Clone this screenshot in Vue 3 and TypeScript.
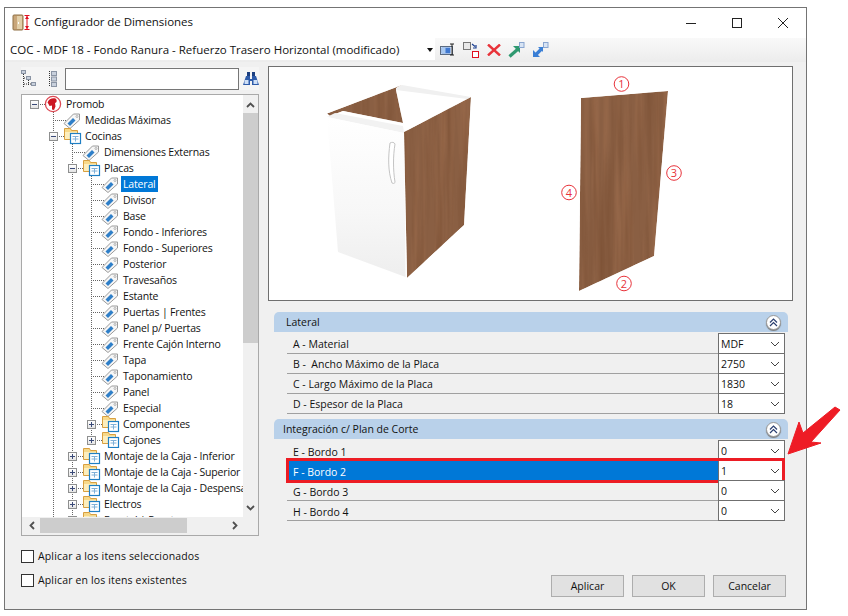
<script setup lang="ts">
type Row = { t: string; l: number; k: 'root' | 'tag' | 'folder'; e?: '+' | '-'; sel?: boolean };
const rows: Row[] = [
  { t: 'Promob', l: 0, k: 'root', e: '-' },
  { t: 'Medidas Máximas', l: 1, k: 'tag' },
  { t: 'Cocinas', l: 1, k: 'folder', e: '-' },
  { t: 'Dimensiones Externas', l: 2, k: 'tag' },
  { t: 'Placas', l: 2, k: 'folder', e: '-' },
  { t: 'Lateral', l: 3, k: 'tag', sel: true },
  { t: 'Divisor', l: 3, k: 'tag' },
  { t: 'Base', l: 3, k: 'tag' },
  { t: 'Fondo - Inferiores', l: 3, k: 'tag' },
  { t: 'Fondo - Superiores', l: 3, k: 'tag' },
  { t: 'Posterior', l: 3, k: 'tag' },
  { t: 'Travesaños', l: 3, k: 'tag' },
  { t: 'Estante', l: 3, k: 'tag' },
  { t: 'Puertas | Frentes', l: 3, k: 'tag' },
  { t: 'Panel p/ Puertas', l: 3, k: 'tag' },
  { t: 'Frente Cajón Interno', l: 3, k: 'tag' },
  { t: 'Tapa', l: 3, k: 'tag' },
  { t: 'Taponamiento', l: 3, k: 'tag' },
  { t: 'Panel', l: 3, k: 'tag' },
  { t: 'Especial', l: 3, k: 'tag' },
  { t: 'Componentes', l: 3, k: 'folder', e: '+' },
  { t: 'Cajones', l: 3, k: 'folder', e: '+' },
  { t: 'Montaje de la Caja - Inferior', l: 2, k: 'folder', e: '+' },
  { t: 'Montaje de la Caja - Superior', l: 2, k: 'folder', e: '+' },
  { t: 'Montaje de la Caja - Despensa', l: 2, k: 'folder', e: '+' },
  { t: 'Electros', l: 2, k: 'folder', e: '+' },
  { t: 'Frontal | Puertas', l: 2, k: 'folder', e: '+' },
];
const groups = [
  {
    title: 'Lateral',
    cls: 'g1',
    rows: [
      { label: 'A - Material', value: 'MDF' },
      { label: 'B -  Ancho Máximo de la Placa', value: '2750' },
      { label: 'C - Largo Máximo de la Placa', value: '1830' },
      { label: 'D - Espesor de la Placa', value: '18' },
    ],
  },
  {
    title: 'Integración c/ Plan de Corte',
    cls: 'g2',
    rows: [
      { label: 'E - Bordo 1', value: '0' },
      { label: 'F - Bordo 2', value: '1', sel: true },
      { label: 'G - Bordo 3', value: '0' },
      { label: 'H - Bordo 4', value: '0' },
    ],
  },
];
const badges = [
  { n: '1', x: 621.5, y: 84 },
  { n: '3', x: 674, y: 173 },
  { n: '4', x: 569, y: 192.5 },
  { n: '2', x: 624, y: 283.5 },
];
</script>

<template>
  <div class="page">
    <div class="dialog">
      <header class="titlebar">
        <svg class="app-icon" width="20" height="18" viewBox="0 0 20 18">
          <rect x="1" y="1" width="10" height="15" rx="1" fill="#c9a67a" stroke="#8f7045" />
          <rect x="5" y="2" width="5" height="13" fill="#e2cfa9" />
          <path d="M6.5 8v2" stroke="#fff" />
          <path d="M12.5 1.5h5M15 2v13M12.5 15.5h5" stroke="#e01020" fill="none" />
          <path d="M13 5l2-3 2 3zM13 12l2 3 2-3z" fill="#e01020" />
        </svg>
        <span class="title">Configurador de Dimensiones</span>
        <div class="win-controls">
          <svg width="10" height="10" viewBox="0 0 10 10"><path d="M0 5.5h10" stroke="#222" /></svg>
          <svg width="10" height="10" viewBox="0 0 10 10"><rect x=".5" y=".5" width="9" height="9" fill="none" stroke="#222" /></svg>
          <svg width="10" height="10" viewBox="0 0 10 10"><path d="M0 0l10 10M10 0L0 10" stroke="#222" /></svg>
        </div>
      </header>

      <div class="toolbar">
        <div class="combo">
          <span>COC - MDF 18 - Fondo Ranura - Refuerzo Trasero Horizontal (modificado)</span>
          <i class="combo-caret"></i>
        </div>
        <div class="tools">
          <svg width="16" height="14" viewBox="0 0 16 14">
            <rect x=".5" y="3.5" width="12" height="8" fill="#fff" stroke="#5a6a80" />
            <rect x="1.5" y="4.5" width="9" height="6" fill="#3f78d0" />
            <rect x="1.5" y="4.5" width="4" height="6" fill="#a8c8f0" />
            <path d="M10 1h4M12 1v11M10 12h4" stroke="#222" fill="none" />
          </svg>
          <svg width="17" height="17" viewBox="0 0 17 17">
            <rect x=".5" y=".5" width="7" height="7" fill="#e8e8e8" stroke="#777" />
            <rect x="9.5" y="9.5" width="6" height="6" fill="#fff" stroke="#e01020" />
            <path d="M9 2l3 2.5M13 3v3h-3" stroke="#1a3f90" fill="none" stroke-width="1.2" />
          </svg>
          <svg width="14" height="12" viewBox="0 0 14 12">
            <path d="M1 .5l12 11M13 .5L1 11.5" stroke="#e8333a" stroke-width="2.4" />
          </svg>
          <svg width="17" height="16" viewBox="0 0 17 16">
            <path d="M1.5 14.5l8-7" stroke="#2f9970" stroke-width="3.2" />
            <path d="M5 4h7v7z" fill="#2f9970" />
            <rect x="11.5" y=".5" width="4.5" height="5" fill="#d8e4f4" stroke="#8aa6d0" />
          </svg>
          <svg width="17" height="16" viewBox="0 0 17 16">
            <path d="M10 6.5l-6 6" stroke="#3a7fd5" stroke-width="3.2" />
            <path d="M1 15V8l7 7z" fill="#3a7fd5" />
            <path d="M6 5h5v5z" fill="#3a7fd5" />
            <rect x="11.5" y=".5" width="4.5" height="5" fill="#d8e4f4" stroke="#8aa6d0" />
          </svg>
        </div>
      </div>

      <main class="body">
        <aside class="left">
          <div class="search-row">
            <svg width="15" height="17" viewBox="0 0 15 17" class="ticon">
              <rect x=".5" y=".5" width="4" height="3" fill="#c8d0dc" stroke="#8a94a4" />
              <rect x="5.5" y="6.5" width="4" height="3" fill="#c8d0dc" stroke="#8a94a4" />
              <rect x="10.5" y="12.5" width="4" height="3" fill="#c8d0dc" stroke="#8a94a4" />
              <path d="M2.5 4v13M7.5 10v6M3 8h2M3 14h7" stroke="#333" stroke-dasharray="1 1" fill="none" />
            </svg>
            <svg width="10" height="16" viewBox="0 0 10 16" class="ticon2">
              <path d="M1.5 0v16" stroke="#333" stroke-dasharray="1 1" />
              <rect x="3.5" y=".5" width="5" height="4" fill="#c8d0dc" stroke="#8a94a4" />
              <rect x="3.5" y="6" width="5" height="4" fill="#c8d0dc" stroke="#8a94a4" />
              <rect x="3.5" y="11.5" width="5" height="4" fill="#c8d0dc" stroke="#8a94a4" />
            </svg>
            <div class="search-input"></div>
            <svg width="16" height="14" viewBox="0 0 16 14">
              <path d="M4 0h3v6H4zM9 0h3v6H9z" fill="#1c3f80" />
              <path d="M3 4h4v3h2V4h4l3 9H9V9H7v4H0z" fill="#2f5caa" />
              <rect x="1.5" y="8" width="4" height="4" fill="#cfe0f7" />
              <rect x="10.5" y="8" width="4" height="4" fill="#cfe0f7" />
            </svg>
          </div>

          <div class="tree-box">
            <div class="tree-top">
              <div class="tree-pane">
                <svg class="tree-lines" width="221" height="422" viewBox="22 95 221 422">
                  <path d="M53.5 112V517M72.5 144V517M91.5 176V440" stroke="#666" stroke-dasharray="1 1" fill="none" />
                  <template v-for="(r, i) in rows" :key="i">
                    <path
                      :d="`M${34 + 19 * r.l} ${104.5 + i * 16}h14`"
                      stroke="#666"
                      stroke-dasharray="1 1"
                    />
                  </template>
                </svg>
                <div v-for="r in rows" :key="r.t" class="tree-row" :style="{ paddingLeft: 19 * r.l + 'px' }">
                  <span class="exp-cell">
                    <span v-if="r.e" class="exp">
                      <i class="h"></i><i v-if="r.e === '+'" class="v"></i>
                    </span>
                  </span>
                  <svg v-if="r.k === 'root'" class="ico" width="20" height="18" viewBox="0 0 20 18">
                    <circle cx="10" cy="9" r="7.6" fill="#fff" stroke="#dd4a54" stroke-width="1.3" />
                    <path d="M4.5 7.5c1-3.5 5-5 8-4 1.5 1.5 1.5 3 .5 4l-1 .5.5 3.5-1.5 3.5-2-.5V10.5l-2.5.5-1-2z" fill="#cc1622" />
                  </svg>
                  <svg v-else-if="r.k === 'tag'" class="ico" width="20" height="18" viewBox="0 0 20 18">
                    <path d="M2 12.5L11.5 3h6v6L8 17.5z" fill="#f6f6f6" stroke="#9a9a9a" />
                    <path d="M5.5 12.5L11 7l2.5 2.5L8 15z" fill="#2f7fc8" />
                    <circle cx="15" cy="5.5" r="1" fill="#fff" stroke="#888" stroke-width=".6" />
                  </svg>
                  <svg v-else class="ico fld" width="20" height="18" viewBox="0 0 20 18">
                    <path d="M2.5 1.5h6l1 2h6v9h-13z" fill="#f7d98a" stroke="#d9a040" />
                    <path d="M3 5h12v7H3z" fill="#fdeebd" />
                    <rect x="8.5" y="6.5" width="10" height="10" fill="#fff" stroke="#1f7fc4" stroke-width="1.2" />
                    <path d="M10.5 9.5h6M13.5 9v5.5M10.5 12h6" stroke="#7fb0d8" fill="none" />
                  </svg>
                  <span class="tree-label" :class="{ selected: r.sel }">{{ r.t }}</span>
                </div>
              </div>
              <div class="vscroll">
                <svg class="chev" width="9" height="6" viewBox="0 0 9 6"><path d="M1 5l3.5-3.5L8 5" fill="none" stroke="#505050" stroke-width="1.8" /></svg>
                <div class="vtrack"><div class="vthumb"></div></div>
                <svg class="chev" width="9" height="6" viewBox="0 0 9 6"><path d="M1 1l3.5 3.5L8 1" fill="none" stroke="#505050" stroke-width="1.8" /></svg>
              </div>
            </div>
            <div class="hscroll">
              <svg width="6" height="9" viewBox="0 0 6 9"><path d="M5 1L1.5 4.5 5 8" fill="none" stroke="#505050" stroke-width="1.8" /></svg>
              <div class="htrack"><div class="hthumb"></div></div>
              <svg width="6" height="9" viewBox="0 0 6 9"><path d="M1 1l3.5 3.5L1 8" fill="none" stroke="#505050" stroke-width="1.8" /></svg>
            </div>
          </div>

          <div class="checks">
            <label class="check"><i class="box"></i><span>Aplicar a los itens seleccionados</span></label>
            <label class="check"><i class="box"></i><span>Aplicar en los itens existentes</span></label>
          </div>
        </aside>

        <section class="right">
          <div class="preview">
            <svg width="523" height="233" viewBox="269 67 523 233">
              <defs>
                <filter id="wood" x="0" y="0" width="100%" height="100%" color-interpolation-filters="sRGB">
                  <feTurbulence type="fractalNoise" baseFrequency="0.13 0.006" numOctaves="3" seed="7" result="n" />
                  <feColorMatrix in="n" type="matrix" values="0 0 0 0 .64  0 0 0 0 .44  0 0 0 0 .31  1.2 0 0 0 -.5" result="c" />
                  <feColorMatrix in="n" type="matrix" values="0 0 0 0 .46  0 0 0 0 .29  0 0 0 0 .18  0 1.2 0 0 -.5" result="d" />
                  <feMerge result="m"><feMergeNode in="SourceGraphic" /><feMergeNode in="c" /><feMergeNode in="d" /></feMerge>
                  <feComposite in="m" in2="SourceGraphic" operator="in" />
                </filter>
                <linearGradient id="door" x1="0" y1="0" x2="0" y2="1">
                  <stop offset="0" stop-color="#ffffff" />
                  <stop offset=".6" stop-color="#f7f7f7" />
                  <stop offset="1" stop-color="#eeeeee" />
                </linearGradient>
              </defs>
              <polygon points="327,113.5 402,85 397,87.5 396,90 403,123 343,111 330,116" fill="#8a5f43" filter="url(#wood)" />
              <polygon points="396,88 402,85 471,97 467,99 396,90" fill="#f0f0f0" />
              <polygon points="327,117 335,113 403,126 404,133" fill="#f2f2f2" />
              <polygon points="327,117 404,133 405.5,277 338,252" fill="url(#door)" />
              <path d="M390 143c-2 15-2 28 2 40 2 1 3 0 3-1-2-12-2-26 0-38-1-2-3-2-5-1z" fill="#fff" stroke="#bdbdbd" stroke-width=".9" />
              <polygon points="404,132 471,97 464,225 407,278" fill="#8a5f43" filter="url(#wood)" />
              <polygon points="581,98 668,91 654,256 579,291" fill="#8a5f43" filter="url(#wood)" />
              <g v-for="b in badges" :key="b.n">
                <circle :cx="b.x" :cy="b.y" r="7.3" fill="#fff" stroke="#e8323a" stroke-width="1" />
                <text :x="b.x" :y="b.y + 4" text-anchor="middle" class="badge-text">{{ b.n }}</text>
              </g>
            </svg>
          </div>

          <div v-for="g in groups" :key="g.title" class="group" :class="g.cls">
            <div class="group-head">
              <span>{{ g.title }}</span>
              <span class="collapse">
                <svg width="9" height="9" viewBox="0 0 9 9"><path d="M1 4.5l3.5-3.5L8 4.5M1 8l3.5-3.5L8 8" fill="none" stroke="#2b3f70" stroke-width="1.2" /></svg>
              </span>
            </div>
            <div class="prop-list">
              <div v-for="p in g.rows" :key="p.label" class="prop" :class="{ 'prop-sel': p.sel }">
                <span class="prop-label">{{ p.label }}</span>
                <span class="prop-select">
                  <span>{{ p.value }}</span>
                  <svg width="10" height="6" viewBox="0 0 10 6"><path d="M1 1l4 4 4-4" fill="none" stroke="#444" /></svg>
                </span>
              </div>
            </div>
          </div>

          <div class="actions">
            <button type="button">Aplicar</button>
            <button type="button">OK</button>
            <button type="button">Cancelar</button>
          </div>
        </section>
      </main>
    </div>

    <svg class="red-arrow" width="60" height="60" viewBox="0 0 60 60">
      <path
        d="M50 2L18 28l-4-11L3 49l33-11-10-1L55 5z"
        fill="#ee1c25"
        stroke="#ee1c25"
        stroke-width="1"
        stroke-linejoin="round"
      />
    </svg>
  </div>
</template>

<style scoped>
.page {
  position: relative;
  width: 848px;
  height: 616px;
  padding: 7px 0 0 4px;
  box-sizing: border-box;
  background: #fff;
  overflow: hidden;
  font-family: "Open Sans", "Noto Sans", sans-serif;
  font-size: 11px;
  color: #111;
}
.dialog {
  width: 803px;
  height: 603px;
  box-sizing: border-box;
  border: 1px solid #747474;
  background: #f0f0f0;
  display: flex;
  flex-direction: column;
}
.titlebar {
  height: 30px;
  flex: none;
  display: flex;
  align-items: center;
  background: #fff;
  padding-left: 7px;
}
.app-icon {
  margin-right: 2px;
}
.title {
  font-size: 11.5px;
  letter-spacing: -.05px;
  margin-bottom: 3px;
}
.win-controls {
  margin-left: auto;
  display: flex;
  gap: 36px;
  padding-right: 18px;
  margin-bottom: 1px;
}
.toolbar {
  height: 24px;
  flex: none;
  display: flex;
  align-items: center;
  background: linear-gradient(#f9f9f9, #ececec);
}
.combo {
  width: 430px;
  height: 22px;
  background: #fff;
  display: flex;
  align-items: center;
  padding-left: 5px;
  box-sizing: border-box;
  font-size: 11.5px;
  white-space: nowrap;
  position: relative;
  margin-bottom: 2px;
}
.combo-caret {
  position: absolute;
  right: 2px;
  top: 10px;
  width: 0;
  height: 0;
  border: 3px solid transparent;
  border-top: 4px solid #111;
  border-bottom: 0;
}
.tools {
  display: flex;
  align-items: center;
  gap: 7px;
  margin-left: 5px;
}
.body {
  flex: 1;
  min-height: 0;
  display: flex;
  padding: 4px 13px 12px 16px;
  gap: 9px;
}
.left {
  width: 238px;
  flex: none;
  display: flex;
  flex-direction: column;
}
.search-row {
  display: flex;
  align-items: center;
  height: 23px;
  margin: 1px 0 4px;
  background: #f5f5f5;
}
.ticon {
  margin-right: 12px;
}
.ticon2 {
  margin-right: 7px;
}
.search-input {
  width: 174px;
  height: 22px;
  box-sizing: border-box;
  border: 1px solid #767676;
  background: #fff;
  margin-right: 4px;
}
.tree-box {
  height: 442px;
  box-sizing: border-box;
  border: 1px solid #a9a9a9;
  display: flex;
  flex-direction: column;
  background: #f0f0f0;
}
.tree-top {
  height: 422px;
  display: flex;
}
.tree-pane {
  position: relative;
  width: 221px;
  overflow: hidden;
  background: #fff;
  padding-top: 1px;
  box-sizing: border-box;
}
.tree-lines {
  position: absolute;
  left: 0;
  top: 0;
}
.tree-row {
  position: relative;
  height: 16px;
  display: flex;
  align-items: center;
  white-space: nowrap;
}
.exp-cell {
  width: 24px;
  height: 16px;
  flex: none;
  display: flex;
  align-items: center;
  justify-content: center;
}
.exp {
  position: relative;
  width: 9px;
  height: 9px;
  box-sizing: border-box;
  border: 1px solid #8e8f8f;
  background: linear-gradient(#fff, #e4e4e4);
}
.exp .h {
  position: absolute;
  left: 1px;
  top: 3px;
  width: 5px;
  height: 1px;
  background: #3a4a78;
}
.exp .v {
  position: absolute;
  left: 3px;
  top: 1px;
  width: 1px;
  height: 5px;
  background: #3a4a78;
}
.ico {
  flex: none;
  margin-left: -3px;
  position: relative;
}
.tree-label {
  margin-left: 1px;
  padding: 0 2px;
  height: 16px;
  line-height: 16px;
  font-size: 10.5px;
  letter-spacing: -.17px;
  background: #fff;
}
.tree-label.selected {
  background: #0078d7;
  color: #fff;
}
.vscroll {
  width: 15px;
  display: flex;
  flex-direction: column;
  align-items: center;
  background: #f0f0f0;
  padding-top: 7px;
  box-sizing: border-box;
}
.chev {
  flex: none;
}
.vtrack {
  flex: 1;
  width: 100%;
  padding-top: 5px;
  box-sizing: border-box;
}
.vthumb {
  height: 230px;
  background: #cdcdcd;
}
.vscroll .chev:last-child {
  margin-bottom: 6px;
}
.hscroll {
  height: 15px;
  margin-top: 1px;
  display: flex;
  align-items: center;
  padding: 0 20px 0 7px;
  box-sizing: border-box;
}
.htrack {
  flex: 1;
  height: 100%;
  padding-left: 5px;
  box-sizing: border-box;
}
.hthumb {
  width: 147px;
  height: 100%;
  background: #cdcdcd;
}
.checks {
  margin-top: 14px;
  display: flex;
  flex-direction: column;
  gap: 11px;
}
.check {
  display: flex;
  align-items: center;
  height: 13px;
  font-size: 10.5px;
  letter-spacing: .15px;
}
.check span {
  margin-bottom: 2px;
}
.box {
  width: 13px;
  height: 13px;
  box-sizing: border-box;
  border: 1px solid #333;
  background: #fff;
  margin-right: 4px;
}
.right {
  flex: 1;
  min-width: 0;
  display: flex;
  flex-direction: column;
}
.preview {
  height: 235px;
  flex: none;
  box-sizing: border-box;
  border: 1px solid #6f6f6f;
  background: #fff;
}
.preview svg {
  display: block;
}
.badge-text {
  font-family: "Open Sans", sans-serif;
  font-size: 11px;
  fill: #e8323a;
}
.group {
  margin: 11px 5px 0 6px;
}
.g2 {
  margin-top: 5px;
}
.group-head {
  height: 20px;
  display: flex;
  align-items: center;
  justify-content: space-between;
  background: #b9d1ea;
  border-radius: 5px 5px 0 0;
  padding: 0 7px 0 12px;
  font-size: 10.5px;
}
.g2 .group-head {
  padding-left: 9px;
}
.collapse {
  width: 15px;
  height: 15px;
  box-sizing: border-box;
  border-radius: 50%;
  border: 1px solid #9a9a9a;
  background: #fff;
  display: flex;
  align-items: center;
  justify-content: center;
  box-shadow: 0 1px 1px #777;
}
.prop-list {
  margin: 2px 3px 0 13px;
}
.prop {
  position: relative;
  height: 20px;
  box-sizing: border-box;
  display: flex;
  border-bottom: 1px solid #a0a0a0;
}
.prop-label {
  flex: 1;
  padding-left: 6px;
  line-height: 20px;
  font-size: 10.5px;
  white-space: pre;
}
.g2 .prop-label {
  line-height: 22px;
}
.prop-select {
  position: relative;
  width: 67px;
  flex: none;
  box-sizing: border-box;
  background: #fff;
  border: 1px solid #6f6f6f;
  height: 21px;
  margin-top: -1px;
  display: flex;
  align-items: center;
  justify-content: space-between;
  padding: 0 4px 0 2px;
  font-size: 10.5px;
}
.prop-sel {
  background: #0078d7;
  border-bottom-color: transparent;
}
.prop-sel .prop-label {
  color: #fff;
}
.prop-sel::after {
  content: "";
  position: absolute;
  left: -1px;
  right: 0;
  top: -3px;
  bottom: -3px;
  border: 3px solid #ec1c24;
  pointer-events: none;
}
.actions {
  margin-top: auto;
  display: flex;
  justify-content: flex-end;
  gap: 8px;
  padding-right: 7px;
}
.actions button {
  width: 73px;
  height: 22px;
  padding: 0;
  border: 1px solid #adadad;
  background: #e1e1e1;
  font: inherit;
  font-size: 10.5px;
  color: #111;
}
.red-arrow {
  position: absolute;
  left: 785px;
  top: 405px;
}
</style>
